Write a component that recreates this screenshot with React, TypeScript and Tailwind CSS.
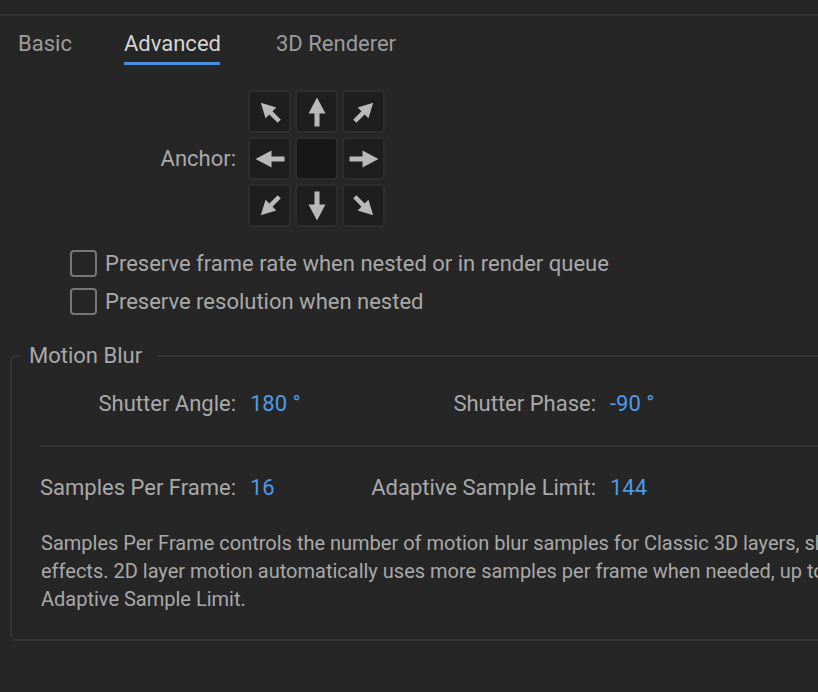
const ARROW = "M0 -14.5 L8.5 1.5 L2.5 1.5 L2.5 14.5 L-2.5 14.5 L-2.5 1.5 L-8.5 1.5 Z";

const ANCHORS = [-45, 0, 45, -90, null, 90, -135, 180, 135];

function AnchorCell({ angle }: { angle: number | null }) {
  const diagonal = angle !== null && angle % 90 !== 0;
  return (
    <div
      className={`w-[43px] h-[43px] rounded-[4px] border-2 border-[#2d2d2d] flex items-center justify-center ${
        angle === null ? "bg-[#171717]" : "bg-[#1e1e1e]"
      }`}
    >
      {angle !== null && (
        <svg width="36" height="36" viewBox="-18 -18 36 36">
          <path
            d={ARROW}
            fill="#b9b9b9"
            transform={`rotate(${angle}) scale(${diagonal ? 0.9 : 1})`}
          />
        </svg>
      )}
    </div>
  );
}

function Checkbox({ label }: { label: string }) {
  return (
    <div className="flex items-center gap-[8px] h-[27px]">
      <div className="w-[27px] h-[27px] rounded-[4px] border-[2.5px] border-[#777777]" />
      <span className="text-[22px] leading-6 text-[#a9a9a9]">{label}</span>
    </div>
  );
}

function FieldRow({ a, av, b, bv }: { a: string; av: string; b: string; bv: string }) {
  return (
    <div className="flex items-center h-6 text-[22px] leading-6 whitespace-nowrap">
      <span className="w-[224px] text-right text-[#a9a9a9]">{a}</span>
      <span className="ml-[14px] w-[100px] text-[#4d9be6]">{av}</span>
      <span className="w-[246px] text-right text-[#a9a9a9]">{b}</span>
      <span className="ml-[14px] text-[#4d9be6]">{bv}</span>
    </div>
  );
}

export default function App() {
  return (
    <div
      className="w-[818px] h-[692px] overflow-hidden bg-[#262626] text-[#a9a9a9]"
      style={{ fontFamily: "Roboto, 'Liberation Sans', sans-serif" }}
    >
      <div className="w-[1000px]">
        <div className="h-[14px]" />
        <div className="h-[2px] bg-[#323232]" />

        {/* Tabs */}
        <div className="flex pl-[18px] pt-[16px] text-[22px] leading-6">
          <div className="w-[106px] text-[#9c9c9c]">Basic</div>
          <div className="w-[152px] flex flex-col">
            <span className="text-[#d4d4d4]">Advanced</span>
            <div className="mt-[6px] h-[3px] w-[96px] bg-[#4a8fe0]" />
          </div>
          <div className="text-[#9c9c9c]">3D Renderer</div>
        </div>

        {/* Anchor */}
        <div className="flex items-center mt-[25px]">
          <span className="w-[236px] text-right text-[22px] leading-6 text-[#a9a9a9]">
            Anchor:
          </span>
          <div className="ml-[12px] grid grid-cols-3 gap-[4px]">
            {ANCHORS.map((a, i) => (
              <AnchorCell key={i} angle={a} />
            ))}
          </div>
        </div>

        {/* Options */}
        <div className="mt-[23px] pl-[70px] flex flex-col gap-[11px]">
          <Checkbox label="Preserve frame rate when nested or in render queue" />
          <Checkbox label="Preserve resolution when nested" />
        </div>

        {/* Motion Blur */}
        <fieldset className="mt-[29px] ml-[10px] border-2 border-[#333333] rounded-[6px] pb-[26px]">
          <legend className="ml-[9px] pl-[8px] pr-[16px] text-[22px] leading-6 text-[#a9a9a9]">
            Motion Blur
          </legend>
          <div className="mt-[24px]">
            <FieldRow a="Shutter Angle:" av="180 °" b="Shutter Phase:" bv="-90 °" />
          </div>
          <div className="mt-[29px] ml-[28px] h-[2px] bg-[#333333]" />
          <div className="mt-[29px]">
            <FieldRow a="Samples Per Frame:" av="16" b="Adaptive Sample Limit:" bv="144" />
          </div>
          <p className="mt-[29px] pl-[29px] text-[20px] leading-[28px] text-[#a9a9a9] whitespace-nowrap">
            Samples Per Frame controls the number of motion blur samples for Classic 3D layers, shape layers, and certain
            <br />
            effects. 2D layer motion automatically uses more samples per frame when needed, up to the
            <br />
            Adaptive Sample Limit.
          </p>
        </fieldset>
      </div>
    </div>
  );
}
